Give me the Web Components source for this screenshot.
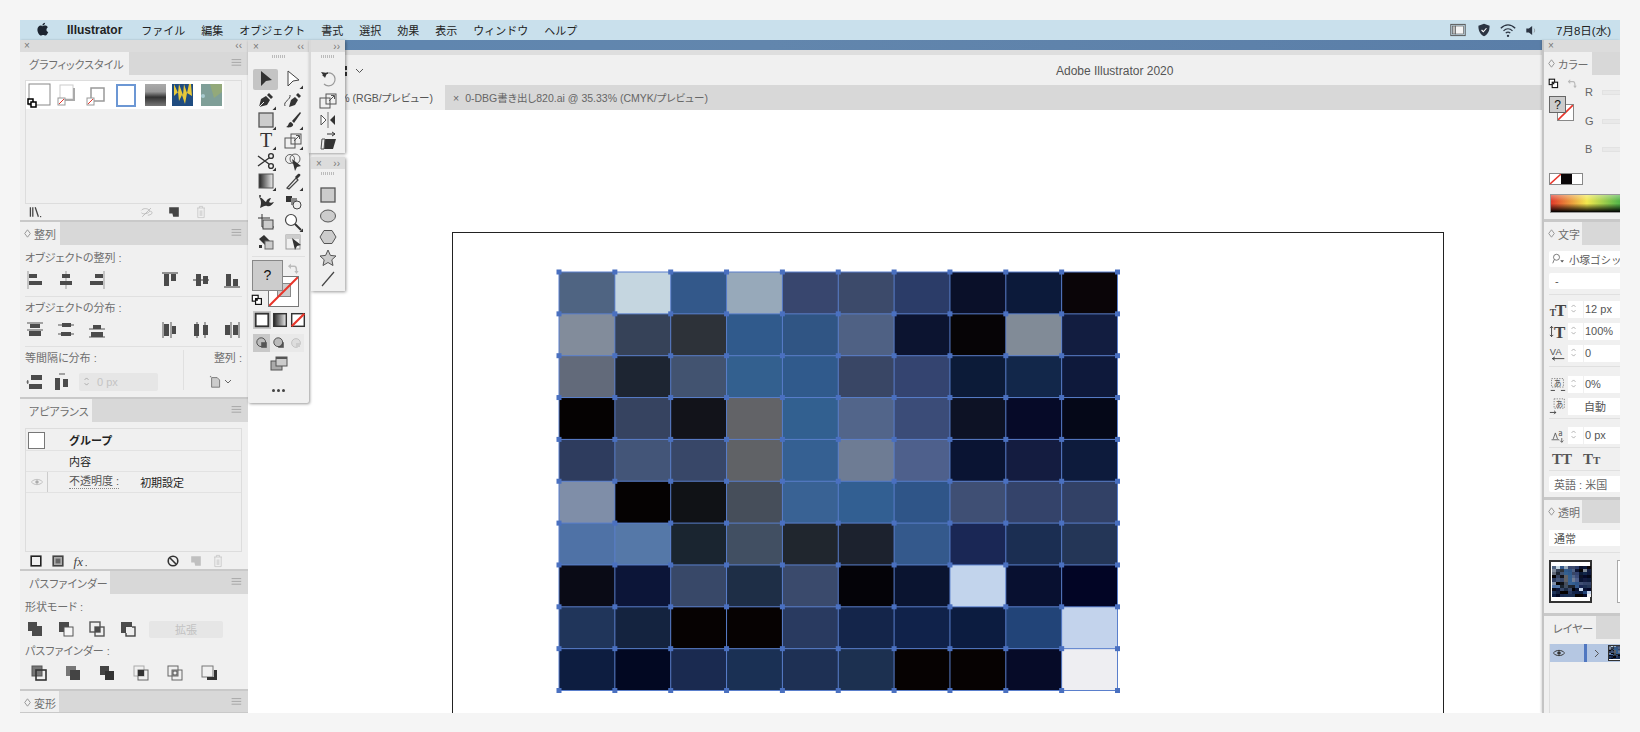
<!DOCTYPE html>
<html lang="ja">
<head>
<meta charset="utf-8">
<title>Illustrator</title>
<style>
  html, body { margin: 0; background: #f5f5f5; }
  body { padding: 20px 20px 0; font-family: "Liberation Sans", "Noto Sans CJK JP", sans-serif; }
</style>
</head>
<body>
<ai-screen></ai-screen>
<script>
// Shared styles and a small helper to register the static components
const BASE = `
  :host { display: block; box-sizing: border-box; }
  * { box-sizing: border-box; }
  .lbl { font-size: 11px; line-height: 16px; color: #6e6e6e; white-space: nowrap; font-feature-settings: "palt"; }
  .row { display: flex; align-items: center; }
  .between { justify-content: space-between; }
  .group { display: flex; gap: 11px; }
  hr { border: 0; border-top: 1px solid #e0e0e0; margin: 0; }
`;
const define = (tag, css, html) => customElements.define(tag, class extends HTMLElement {
    connectedCallback() {
        if (this.shadowRoot) return;
        this.attachShadow({ mode: 'open' }).innerHTML =
            `<style>${BASE}${css}</style>${typeof html === 'function' ? html(this) : html}`;
    }
});

// ---------- Icons ----------
const D = '#4b4b4b';
const rc = (x, y, w, h, fill = D, extra = '') => `<rect x="${x}" y="${y}" width="${w}" height="${h}" fill="${fill}" ${extra}/>`;
const ln = (d, c = '#555', w = 1) => `<path d="${d}" fill="none" stroke="${c}" stroke-width="${w}"/>`;
const box = (x, y, s, fill = 'none', c = D, w = 1.4) => rc(x, y, s, s, fill, `stroke="${c}" stroke-width="${w}"`);
const SLASH = '#e8352a';
const ICONS = {
    'al-l': ln('M3 1v18', '#999') + rc(4, 4, 8, 4) + rc(4, 11, 13, 4),
    'al-c': ln('M10 1v18', '#999') + rc(6, 4, 8, 4) + rc(4, 11, 12, 4),
    'al-r': ln('M17 1v18', '#999') + rc(8, 4, 8, 4) + rc(3, 11, 13, 4),
    'al-t': ln('M2 3h16', '#333') + rc(4, 4, 5, 12) + rc(11, 4, 5, 7),
    'al-m': ln('M2 10h16', '#333') + rc(5, 4, 5, 12) + rc(12, 6, 5, 8),
    'al-b': ln('M2 17h16', '#333') + rc(4, 4, 5, 12) + rc(11, 9, 5, 7),
    'di-t': ln('M2 3h16M2 10h16', '#555') + rc(5, 4, 10, 4) + rc(4, 11, 12, 5),
    'di-m': ln('M2 5h16M2 14h16', '#555') + rc(6, 3, 9, 4) + rc(5, 12, 10, 4),
    'di-b': ln('M2 9h16M2 17h16', '#555') + rc(6, 5, 8, 4) + rc(4, 12, 12, 5),
    'di-l': ln('M3 2v16M11 2v16', '#555') + rc(4, 4, 5, 12) + rc(12, 6, 4, 8),
    'di-c': ln('M6 2v16M14 2v16', '#555') + rc(3, 4, 5, 12) + rc(12, 5, 5, 10),
    'di-r': ln('M9 2v16M17 2v16', '#555') + rc(3, 5, 5, 10) + rc(11, 5, 5, 10),
    'sp-v': ln('M2 10h2M3 8l-1 2 1 2', '#555') + rc(6, 3, 11, 5) + rc(4, 12, 13, 5),
    'sp-h': ln('M7 2h6', '#555') + rc(3, 6, 5, 12) + rc(11, 7, 5, 8),
    'artb': ln('M3 3v1M3 3h1', '#555') + `<path d="M4.5 4.5h7l3 3v9h-10z" fill="#ccc" stroke="#666"/>`,
    libs: ln('M3 4v12M6 4v12', '#444', 1.6) + ln('M9 4l4 12', '#444', 1.6) + rc(15, 15, 1.5, 1.5),
    unlink: ln('M3 8c2-3 8-3 10 0s-8 6-10 3M15 5l-11 11M14 9c2 0 3 2 2 3s-3 2-5 2', '#b5b5b5', 1),
    newb: `<path d="M4 4h12v12H9l-1-4H4z" fill="#444"/>`,
    newg: `<path d="M4 4h12v12H9l-1-4H4z" fill="#c0c0c0"/>`,
    trash: ln('M5 5h10M8 5V3h4v2M6 5v12h8V5M9 8v7M11 8v7', '#c5c5c5'),
    sq: box(4, 4, 12, 'none', '#222', 2),
    sqf: box(4, 4, 12, '#aaa', '#444', 2) + rc(7, 7, 6, 6, '#666'),
    fx: `<text x="2" y="16" font-family="Liberation Serif" font-style="italic" font-size="16" fill="#444">fx</text>` + rc(17, 15, 1.4, 1.4),
    ban: `<circle cx="10" cy="10" r="6" fill="none" stroke="#333" stroke-width="2"/>` + ln('M6 6l8 8', '#333', 2),
    eye: `<path d="M2 10c4-5 12-5 16 0-4 5-12 5-16 0z" fill="none" stroke="#aaa"/><circle cx="10" cy="10" r="2.5" fill="#aaa"/>`,
    eyed: `<path d="M2 10c4-5 12-5 16 0-4 5-12 5-16 0z" fill="none" stroke="#333" stroke-width="1.4"/><circle cx="10" cy="10" r="2.6" fill="#333"/>`,
    'sh-1': rc(3, 3, 9, 9) + rc(7, 7, 10, 10),
    'sh-2': rc(3, 3, 10, 10) + box(8, 8, 9, '#f5f5f5', '#555', 1),
    'sh-3': box(3, 3, 10, '#eee', '#555', 1.4) + box(8, 8, 9, 'none', '#555', 1.4) + rc(8, 8, 5, 5),
    'sh-4': rc(3, 3, 11, 11) + box(8, 8, 9, '#eee', '#444', 1.4) + rc(8, 8, 6, 6, '#eee'),
    'pf-1': box(3, 3, 10, '#777', '#555', 1) + box(7, 7, 10, 'none', '#333', 1.6),
    'pf-2': rc(3, 3, 10, 10, '#777') + rc(7, 7, 10, 10, '#444'),
    'pf-3': rc(3, 3, 9, 9, '#444') + rc(8, 8, 9, 9, '#333'),
    'pf-4': box(3, 3, 10, 'none', '#aaa', 1) + box(7, 7, 10, 'none', '#666', 1) + rc(7, 7, 6, 6, '#333'),
    'pf-5': box(3, 3, 10, 'none', '#666', 1) + box(7, 7, 10, 'none', '#666', 1) + box(8, 8, 4, 'none', '#444', 1),
    'pf-6': box(3, 3, 11, '#f0f0f0', '#777', 1) + `<path d="M15 7h3v10H8v-3h7z" fill="#333"/>`,
    // tools
    select: `<path d="M5 2l11 9-6 1-5 5z" fill="#333"/>`,
    direct: `<path d="M5 2l11 9-6 1-5 5z" fill="#fff" stroke="#444"/>`,
    pen: `<path d="M3 17l2-8 5-3 4 4-3 5z" fill="#333"/><path d="M11 5l2-2 4 4-2 2z" fill="#333"/><path d="M3 17l5-5" stroke="#eee"/>`,
    curve: ln('M2 16c-2-5 6-6 5-11', '#444') + `<path d="M6 17l2-7 4-3 3 3-3 5z" fill="#333"/><path d="M13 5l2-2 3 3-2 2z" fill="#333"/>`,
    rect: box(3, 3, 14, '#ccc', '#555', 1.3),
    brush: `<path d="M17 2l1 1-7 10-2-2z" fill="#333"/><path d="M8 12c-3 0-2 4-5 5 3 1 8 0 7-3z" fill="#333"/>`,
    type: `<text x="10" y="16.5" text-anchor="middle" font-family="Liberation Serif" font-size="20" fill="#333">T</text>`,
    scale: box(2, 8, 10, 'none', '#555', 1) + rc(8, 4, 10, 10, 'none', 'stroke="#555"') + ln('M11 11l5-5M13 5.5h3.5V9', '#555'),
    scissors: `<circle cx="15" cy="5" r="2.4" fill="none" stroke="#333" stroke-width="1.4"/><circle cx="15" cy="15" r="2.4" fill="none" stroke="#333" stroke-width="1.4"/>` + ln('M2 5l11 8M2 15l11-8', '#333', 1.4),
    builder: `<circle cx="7" cy="8" r="4.5" fill="none" stroke="#666"/><circle cx="12" cy="8" r="5" fill="none" stroke="#666"/>` + `<path d="M9 8l9 7-4 1-2 4z" fill="#333"/>`,
    grad: `<rect x="3" y="3" width="14" height="14" fill="url(#g)" stroke="#555"/>`,
    drop: ln('M4 17l9-10 2 2-9 9z', '#444', 1.2) + `<path d="M12 6l3-3c2-1 3 1 2 2l-3 3z" fill="#333"/>`,
    spray: `<path d="M3 5c3 4 2 8 1 11 3-1 5-3 7-2 3 1 5-1 7-4-3 1-4 1-5 0l2-4c-2 0-4 1-5 4-2-1-3-4-7-5z" fill="#333"/><circle cx="4" cy="4" r="1" fill="#333"/>`,
    symb: rc(3, 4, 6, 6, '#333') + rc(8, 6, 6, 7, '#888') + `<circle cx="14" cy="13" r="4" fill="#eee" stroke="#444"/>`,
    crop: ln('M6 2v13h12M2 6h12', '#333') + rc(7, 8, 10, 9, '#ccc', 'stroke="#444"'),
    zoom: `<circle cx="8" cy="8" r="5.5" fill="#fff" stroke="#444" stroke-width="1.2"/>` + ln('M12 12l6 6', '#333', 2),
    bucket: `<path d="M3 7l5-4 6 6-5 4z" fill="#333"/>` + box(9, 9, 8, '#ccc', '#666', 1) + rc(3, 13, 3, 3, '#333'),
    persp: box(3, 3, 14, 'none', '#999', 1) + rc(3, 3, 14, 4, '#ccc') + `<path d="M9 6l9 7-4 1-2 4z" fill="#333"/>`,
    rotate: ln('M5 7a6.5 6.5 0 1 1 1 8', '#999', 1.2) + `<path d="M3 3l6 1-2 5z" fill="#333"/>` + ln('M5 7a6.5 6.5 0 0 1 5-3', '#333', 1.6),
    reflect: ln('M10 2v16', '#777', 1) + `<path d="M8 10L3 5v10z" fill="#fff" stroke="#555"/><path d="M12 10l5-5v10z" fill="#333"/>`,
    shear: ln('M9 3h8M14 1l3 2-3 2', '#333') + `<path d="M4 8h14l-3 10H3z" fill="#333"/><path d="M4 8h3l-1 10H3z" fill="#eee" stroke="#555"/>`,
    ell: `<ellipse cx="10" cy="10" rx="7.5" ry="6" fill="#ccc" stroke="#555"/>`,
    hex: `<path d="M6 3.5h8l4 6.5-4 6.5H6L2 10z" fill="#ccc" stroke="#555"/>`,
    star: `<path d="M10 2l2.4 5.4 5.6.6-4.2 3.8 1.2 5.7-5-3-5 3 1.2-5.7L2 8l5.6-.6z" fill="#ccc" stroke="#555"/>`,
    line: ln('M4 17L16 3', '#444', 1.2),
    swapk: box(2, 2, 9, '#fff', '#111', 1.8) + box(7, 7, 9, '#fff', '#111', 1.8) + rc(7.5, 7.5, 3, 3, '#111'),
    undoa: ln('M4 6h8c3 0 3 3 3 8', '#bbb', 2) + `<path d="M7 2L3 6l4 4zM12 13h6l-3 4z" fill="#bbb"/>`,
    screen: rc(2, 7, 11, 9, '#aaa', 'stroke="#555"') + rc(7, 3, 11, 9, '#ccc', 'stroke="#555"') + rc(7, 3, 11, 2, '#555'),
    dmn: box(3, 3, 14, '#fff', '#333', 2),
    dmg: `<rect x="3" y="3" width="14" height="14" fill="url(#g)" stroke="#333" stroke-width="1.6"/>`,
    dmx: box(3, 3, 14, '#fff', '#333', 1.6) + ln('M3 17L17 3', SLASH, 2.4),
    dr1: `<circle cx="9" cy="9" r="5.5" fill="#bbb" stroke="#333"/>` + rc(9, 9, 7, 7, '#555'),
    dr2: rc(9, 9, 7, 7, '#555') + `<circle cx="9" cy="9" r="5.5" fill="#bbb" stroke="#333"/>`,
    dr3: `<circle cx="10" cy="10" r="5.5" fill="#ddd" stroke="#bbb"/>` + rc(10, 10, 5, 5, '#ccc'),
    monitor: rc(1, 3, 18, 14, 'none', 'stroke="#555" stroke-width="1.2"') + rc(3, 5, 4, 10, '#bbb', 'stroke="#555" stroke-width=".8"') + rc(7, 5, 10, 10, '#f4f4f4', 'stroke="#555" stroke-width=".8"'),
    shield: `<path d="M10 1l8 3c0 7-2 12-8 15C4 16 2 11 2 4z" fill="#2b3442"/>` + ln('M6.5 10l2.5 2.5 4.5-5', '#fff', 1.6),
    wifi: ln('M2 8c5-5 11-5 16 0M5 11c3-3 7-3 10 0M7.5 13.5c1.5-1.5 3.5-1.5 5 0', '#2b3442', 1.4) + `<circle cx="10" cy="16.5" r="1.3" fill="#2b3442"/>`,
    sound: `<path d="M2 7h4l5-4v14l-5-4H2z" fill="#2b3442"/>` + ln('M14 7c1 2 1 4 0 6', '#777', 1),
    apple: `<path d="M13 1c0 2-2 4-4 4 0-2 2-4 4-4zM9 6c1 0 2-1 4-1 1 0 3 .6 4 2.400-3 2-2.500 6 .5 7-1 2.600-2.500 5-4 5-1.200 0-1.800-.8-3.200-.8S8 19.400 7 19.400C5 19.400 2 15 2 11c0-3.500 2.300-6 5-6 .8 0 1.500 1 2 1z" fill="#1c2430"/>`,
    menu: ln('M2 4.500h12M2 8h12M2 11.500h12', '#9a9a9a', 1),
    updn: ln('M4 6l3-3 3 3M4 11l3 3 3-3', '#8c8c8c', 1),
    tsup: ln('M3 15h9M5 14l2.500-7L10 14', '#555') + `<text x="11" y="10" font-size="9" fill="#555" font-family="Noto Sans CJK JP">a</text>` + ln('M15 13v5M13 16l2 2 2-2', '#555'),
    ak1: rc(3, 3, 14, 10, 'none', 'stroke="#777" stroke-dasharray="1.500 1.500"') + `<text x="10" y="12" text-anchor="middle" font-size="9" fill="#444" font-family="Noto Sans CJK JP">あ</text>` + ln('M2 17h5M14 17h5', '#333'),
    ak2: rc(6, 1, 12, 11, 'none', 'stroke="#777" stroke-dasharray="1.500 1.500"') + `<text x="12" y="10" text-anchor="middle" font-size="9" fill="#444" font-family="Noto Sans CJK JP">あ</text>` + ln('M1 17h7M6 15l2 2-2 2', '#333'),
    va: `<text x="1" y="12" font-size="11" fill="#555" font-family="Liberation Sans">VA</text>` + ln('M4 16h14M7 14l-3 2 3 2', '#333'),
    tsize: `<text x="1" y="18" font-size="11" font-weight="bold" fill="#444" font-family="Liberation Serif">T</text><text x="7" y="18" font-size="20" font-weight="bold" fill="#444" font-family="Liberation Serif">T</text>`,
    tlead: ln('M3 4v12M1 6l2-2 2 2M1 14l2 2 2-2', '#333') + `<text x="6" y="18" font-size="20" font-weight="bold" fill="#444" font-family="Liberation Serif">T</text>`,
    find: `<circle cx="6" cy="7" r="4" fill="none" stroke="#555"/>` + ln('M3 10l-2 5', '#555') + `<path d="M11 11h5l-2.500 3z" fill="#555"/>`
};
customElements.define('ai-icon', class extends HTMLElement {
    connectedCallback() {
        const name = this.getAttribute('name');
        const s = this.getAttribute('size') || 20;
        const corner = this.hasAttribute('corner') ? '<path d="M20 20h-3.500l3.500-3.500z" fill="#333"/>' : '';
        this.attachShadow({ mode: 'open' }).innerHTML = `
          <style>:host{display:inline-flex;flex:none;width:${s}px;height:${s}px} svg{display:block;overflow:visible}</style>
          <svg width="${s}" height="${s}" viewBox="0 0 20 20">
            <defs><linearGradient id="g"><stop offset="0" stop-color="#222"/><stop offset="1" stop-color="#eee"/></linearGradient></defs>
            ${ICONS[name] || ''}${corner}
          </svg>`;
    }
});
const ic = (name, extra = '') => `<ai-icon name="${name}" ${extra}></ai-icon>`;

// ---------- Panel shell ----------
define('ai-panel', `
  :host { background: #f0f0f0; display: flex; flex-direction: column; overflow: hidden; flex: none; }
  .bar { height: 12px; background: #dcdcdc; display: flex; align-items: center; justify-content: space-between; padding: 0 6px 0 4px; color: #777; font-size: 10px; line-height: 12px; }
  .tabs { display: flex; height: 23px; background: #d8d8d8; flex: none; }
  .tab { background: #f0f0f0; display: flex; align-items: center; gap: 3px; padding: 0 var(--tab-pad, 9px) 0 9px; width: var(--tab-w, auto); font-size: 11px; color: #6e6e6e; white-space: nowrap; font-feature-settings: "palt"; }
  .tab.dm { padding-left: 4px; }
  .tab svg { flex: none; }
  .fill { flex: 1; display: flex; align-items: center; justify-content: flex-end; padding-right: 2px; }
  .body { flex: 1; min-height: 0; position: relative; }
`, el => `
  ${el.hasAttribute('bar') ? `<div class="bar"><span>×</span><span>${el.getAttribute('bar')}</span></div>` : ''}
  <div class="tabs">
    <div class="tab ${el.hasAttribute('diamond') ? 'dm' : ''}">
      ${el.hasAttribute('diamond') ? '<svg width="7" height="9" viewBox="0 0 7 9"><path d="M3.500.8L6.300 4.500 3.500 8.200.7 4.500z" fill="none" stroke="#999"/></svg>' : ''}
      ${el.getAttribute('label')}
    </div>
    <div class="fill">${el.hasAttribute('nomenu') ? '' : ic('menu', 'size="16"')}</div>
  </div>
  <div class="body"><slot></slot></div>
`);

// ---------- Left dock ----------
const swatch = {
    a: `<rect x="3" y="3" width="21" height="21" fill="#fff" stroke="#888"/><rect x="2" y="18" width="5" height="5" fill="#fff" stroke="#000" stroke-width="1.500"/><rect x="5" y="21" width="5" height="5" fill="#fff" stroke="#000" stroke-width="1.500"/>`,
    b: `<rect x="6" y="4" width="13" height="14" fill="#fff" stroke="#ccc"/><path d="M8 19h12V7" fill="none" stroke="#aaa" stroke-width="2"/><rect x="4" y="17" width="7" height="7" fill="#fff" stroke="#999"/><path d="M5 23l5-5" stroke="${SLASH}"/>`,
    c: `<rect x="9" y="7" width="13" height="13" fill="#fff" stroke="#999" stroke-width="1.500"/><rect x="5" y="17" width="7" height="7" fill="#fff" stroke="#999"/><path d="M6 23l5-5" stroke="${SLASH}"/>`
};
define('style-swatches', `
  :host { display: flex; height: 28px; width: 198px; background: #fff; }
  svg { display: block; flex: none; }
`, `
  <svg width="28" height="28">${swatch.a}</svg>
  <svg width="28" height="28">${swatch.b}</svg>
  <svg width="28" height="28">${swatch.c}</svg>
  <svg width="28" height="28"><rect x="7" y="4" width="18" height="21" fill="#fff" stroke="#6c97d4" stroke-width="2"/></svg>
  <svg width="28" height="28"><defs><linearGradient id="m" x2="0" y2="1"><stop offset="0" stop-color="#aaa"/><stop offset=".35" stop-color="#999"/><stop offset=".6" stop-color="#333"/><stop offset="1" stop-color="#777"/></linearGradient></defs><rect x="7" y="3" width="21" height="22" fill="url(#m)"/></svg>
  <svg width="28" height="28"><rect x="6" y="3" width="21" height="22" fill="#1f4c80"/><path d="M8 3l4 9 1-9 4 11 1-11 3 9 2-9h2l1 12-5-3-2 11-3-9-3 6-1-9-4 4z" fill="#e8c93a"/></svg>
  <svg width="28" height="28"><rect x="7" y="3" width="21" height="22" fill="#7f9f98"/><path d="M16 3h12v8l-8 6z" fill="#93a97a"/><circle cx="9" cy="15" r="2" fill="#a8cbd0"/></svg>
`);
define('graphic-styles-panel', `
  .list { margin: 5px 6px 0 5px; height: 124px; border: 1px solid #ddd; }
  .foot { padding: 0 8px; gap: 11px; height: 16px; }
  .sp { flex: 1; }
`, `
  <ai-panel bar="‹‹" label="グラフィックスタイル" style="height:180px;--tab-w:109px">
    <div class="list"><style-swatches></style-swatches></div>
    <div class="row foot">${ic('libs', 'size="16"')}<span class="sp"></span>${ic('unlink', 'size="16"')}${ic('newb', 'size="16"')}${ic('trash', 'size="16"')}<span style="width:20px"></span></div>
  </ai-panel>
`);
define('align-panel', `
  .pad { padding: 5px 6px 0 5px; }
  .icons { height: 20px; margin-top: 4px; }
  hr { margin: 6px 0 3px; }
  .third { display: flex; height: 45px; }
  .third > div:first-child { flex: 1; border-right: 1px solid #e0e0e0; height: 40px; }
  .ic2 { gap: 7px; height: 22px; margin-top: 5px; }
  .num { width: 79px; height: 18px; background: #e6e6e6; border-radius: 2px; display: flex; align-items: center; gap: 2px; color: #c4c4c4; font-size: 11px; padding-left: 3px; }
  .r { width: 58px; text-align: right; }
`, `
  <ai-panel diamond label="整列" style="height:175px;--tab-w:40px">
    <div class="pad">
      <div class="lbl">オブジェクトの整列 :</div>
      <div class="row between icons">
        <div class="group">${ic('al-l')}${ic('al-c')}${ic('al-r')}</div>
        <div class="group">${ic('al-t')}${ic('al-m')}${ic('al-b')}</div>
      </div>
      <hr>
      <div class="lbl">オブジェクトの分布 :</div>
      <div class="row between icons">
        <div class="group">${ic('di-t')}${ic('di-m')}${ic('di-b')}</div>
        <div class="group">${ic('di-l')}${ic('di-c')}${ic('di-r')}</div>
      </div>
      <hr>
      <div class="third">
        <div>
          <div class="lbl">等間隔に分布 :</div>
          <div class="row ic2">${ic('sp-v')}${ic('sp-h')}<div class="num">${ic('updn', 'size="13"')}0 px</div></div>
        </div>
        <div class="r">
          <div class="lbl">整列 :</div>
          <div class="row" style="justify-content:center;height:22px;margin-top:5px;padding-left:14px">${ic('artb', 'size="16"')}<svg width="8" height="6"><path d="M1 1l3 3 3-3" fill="none" stroke="#666"/></svg></div>
        </div>
      </div>
    </div>
  </ai-panel>
`);
define('appearance-panel', `
  .list { margin: 6px 6px 0 5px; height: 124px; border: 1px solid #ddd; font-size: 11px; color: #222; padding-top: 1px; }
  .rw { display: flex; align-items: center; height: 21px; border-bottom: 1px solid #e2e2e2; }
  .sw { width: 17px; height: 17px; background: #fff; border: 1px solid #777; margin-left: 2px; }
  .eye { width: 22px; height: 100%; border-right: 1px solid #ccc; display: flex; align-items: center; justify-content: center; }
  .foot { padding: 0 0 0 8px; height: 17px; }
  .u { border-bottom: 1px dotted #888; color: #555; line-height: 13px; }
`, `
  <ai-panel label="アピアランス" style="height:170px;--tab-w:72px">
    <div class="list">
      <div class="rw"><span class="sw"></span><b style="margin-left:24px">グループ</b></div>
      <div class="rw"><span style="margin-left:43px">内容</span></div>
      <div class="rw"><span class="eye">${ic('eye', 'size="14"')}</span><span class="u" style="margin-left:21px">不透明度 :</span><span style="margin-left:21px">初期設定</span></div>
    </div>
    <div class="row foot">
      ${ic('sq', 'size="16"')}<span style="width:6px"></span>${ic('sqf', 'size="16"')}<span style="width:6px"></span>${ic('fx', 'size="16"')}
      <span style="width:77px"></span>${ic('ban', 'size="16"')}<span style="width:7px"></span>${ic('newg', 'size="16"')}<span style="width:6px"></span>${ic('trash', 'size="16"')}
    </div>
  </ai-panel>
`);
define('pathfinder-panel', `
  .pad { padding: 5px 6px 0 5px; }
  .icons { height: 22px; }
  .btn { width: 74px; height: 17px; background: #e6e6e6; border-radius: 2px; color: #c2c2c2; font-size: 11px; display: flex; align-items: center; justify-content: center; }
`, `
  <ai-panel label="パスファインダー" style="height:118px;--tab-w:90px">
    <div class="pad">
      <div class="lbl">形状モード :</div>
      <div class="row icons" style="gap:11px;margin-top:3px">${ic('sh-1')}${ic('sh-2')}${ic('sh-3')}${ic('sh-4')}<div class="btn">拡張</div></div>
      <div class="lbl" style="margin-top:3px">パスファインダー :</div>
      <div class="row icons" style="gap:14px;padding-left:4px;margin-top:3px">${ic('pf-1')}${ic('pf-2')}${ic('pf-3')}${ic('pf-4')}${ic('pf-5')}${ic('pf-6')}</div>
    </div>
  </ai-panel>
`);
define('left-dock', `
  :host { width: 228px; background: #c9c9c9; display: flex; flex-direction: column; gap: 2px; flex: none; box-shadow: 1px 0 2px rgba(0,0,0,.2); overflow: hidden; }
`, `
  <graphic-styles-panel></graphic-styles-panel>
  <align-panel></align-panel>
  <appearance-panel></appearance-panel>
  <pathfinder-panel></pathfinder-panel>
  <ai-panel diamond label="変形" style="height:21px;--tab-w:39px"></ai-panel>
`);

// ---------- Floating tool palettes ----------
define('tool-palette', `
  :host { position: absolute; left: 228px; top: 20px; width: 61px; height: 363px; background: #f0f0f0; box-shadow: 1px 1px 3px rgba(0,0,0,.4); border-radius: 0 0 2px 2px; }
  .bar { height: 12px; background: #dcdcdc; display: flex; justify-content: space-between; align-items: center; padding: 0 5px; color: #777; font-size: 10px; }
  .grip { height: 8px; display: flex; justify-content: center; align-items: center; }
  .grip i { width: 14px; height: 3px; background: repeating-linear-gradient(90deg, #bbb 0 1px, transparent 1px 2px); }
  .tools { display: grid; grid-template-columns: 27px 27px; grid-auto-rows: 20.4px; padding: 9px 0 0 4px; justify-items: center; align-items: center; }
  .on { background: #c4c4c4; width: 25px; height: 21px; border-radius: 2px; display: flex; align-items: center; justify-content: center; }
  .div { margin: 3px 4px 0; border-top: 1px solid #e0e0e0; }
  .fs { position: relative; height: 47px; margin-top: 3px; }
  .fill { position: absolute; left: 4px; top: 0; width: 31px; height: 31px; background: #ccc; border: 1px solid #888; z-index: 1; font-size: 14px; color: #111; display: flex; align-items: center; justify-content: center; }
  .stroke { position: absolute; left: 20px; top: 16px; width: 31px; height: 31px; background: #fff; border: 1px solid #777; }
  .stroke i { position: absolute; left: 8px; top: 6px; width: 14px; height: 14px; background: #ccc; border: 1px solid #888; }
  .stroke svg { position: absolute; left: 0; top: 0; }
  .fs ai-icon { position: absolute; }
  .modes { display: flex; justify-content: space-between; margin: 5px 5px 0; height: 18px; background: #e9e9e9; }
  .modes span { width: 17px; display: flex; align-items: center; justify-content: center; }
  .modes .sel { background: #c8c8c8; }
  .scr { display: flex; justify-content: center; margin-top: 2px; }
  .dots { text-align: center; margin-top: 11px; height: 12px; display: flex; justify-content: center; gap: 2px; align-items: center; }
  .dots i { width: 3px; height: 3px; background: #444; border-radius: 50%; }
`, `
  <div class="bar"><span>×</span><span>‹‹</span></div>
  <div class="grip"><i></i></div>
  <div class="tools">
    <span class="on">${ic('select')}</span>${ic('direct', 'corner')}
    ${ic('pen', 'corner')}${ic('curve')}
    ${ic('rect', 'corner')}${ic('brush', 'corner')}
    ${ic('type', 'corner')}${ic('scale', 'corner')}
    ${ic('scissors', 'corner')}${ic('builder')}
    ${ic('grad', 'corner')}${ic('drop', 'corner')}
    ${ic('spray')}${ic('symb')}
    ${ic('crop')}${ic('zoom', 'corner')}
    ${ic('bucket')}${ic('persp')}
  </div>
  <div class="div"></div>
  <div class="fs">
    <div class="stroke"><i></i><svg width="29" height="29"><path d="M0 29L29 0" stroke="${SLASH}" stroke-width="2"/></svg></div>
    <div class="fill">?</div>
    ${ic('undoa', 'size="14" style="left:38px;top:2px"')}
    ${ic('swapk', 'size="13" style="left:3px;top:34px"')}
  </div>
  <div class="modes" style="background:transparent;margin-top:4px">
    <span class="sel" style="width:18px">${ic('dmn', 'size="18"')}</span><span style="width:18px">${ic('dmg', 'size="18"')}</span><span style="width:18px">${ic('dmx', 'size="18"')}</span>
  </div>
  <div class="modes" style="margin-top:5px">
    <span class="sel">${ic('dr1', 'size="16"')}</span><span>${ic('dr2', 'size="16"')}</span><span>${ic('dr3', 'size="16"')}</span>
  </div>
  <div class="scr">${ic('screen')}</div>
  <div class="dots"><i></i><i></i><i></i></div>
`);
const miniBar = `
  :host { position: absolute; background: #f0f0f0; box-shadow: 1px 1px 3px rgba(0,0,0,.4); width: 34px; }
  .bar { height: 12px; background: #dcdcdc; display: flex; justify-content: space-between; align-items: center; padding: 0 5px; color: #777; font-size: 10px; }
  .grip { height: 8px; display: flex; justify-content: center; align-items: center; }
  .grip i { width: 14px; height: 3px; background: repeating-linear-gradient(90deg, #bbb 0 1px, transparent 1px 2px); }
  .col { display: flex; flex-direction: column; align-items: center; }
`;
define('transform-palette', miniBar + `
  :host { left: 289px; top: 20px; height: 113px; width: 36px; border-left: 2px solid #d8d8d8; }
  .col { margin-top: 9px; gap: .5px; }
`, `
  <div class="bar"><span></span><span>››</span></div>
  <div class="grip"><i></i></div>
  <div class="col">${ic('rotate')}${ic('scale')}${ic('reflect')}${ic('shear')}</div>
`);
define('shape-palette', miniBar + `
  :host { left: 291px; top: 137px; height: 134px; }
  .col { margin-top: 8px; gap: 1px; }
`, `
  <div class="bar"><span>×</span><span>››</span></div>
  <div class="grip"><i></i></div>
  <div class="col">${ic('rect')}${ic('ell')}${ic('hex')}${ic('star')}${ic('line')}</div>
`);

// ---------- Document ----------
const CELLS = [
  '#4f6482 #c5d6e0 #33588a #97a9ba #38466e #3c4a6a #2b3c68 #0a1029 #0c1a3a #0a0508',
  '#828c9b #364258 #2d3239 #305a8c #305584 #4f6184 #0c1430 #060406 #818b97 #121d40',
  '#626a7a #1d2532 #425370 #33608f #305a8c #394665 #344470 #0c1b38 #12274a #0e193b',
  '#050202 #364360 #12131a #626367 #326090 #52658a #3b4c78 #0d1225 #060a28 #050818',
  '#2e3c5e #435578 #384768 #606266 #356092 #6e7c94 #4e608c #0a1433 #141c40 #0d1b3c',
  '#7f8ea8 #050202 #101216 #464e5a #396294 #325f92 #2f5588 #3f4f74 #34436a #324166',
  '#4f72a6 #5578a8 #1a2530 #414f62 #20262e #1c222e #34598c #1a2755 #1b2e52 #243657',
  '#0a0b16 #0c1538 #384868 #1e2e46 #3a4a6c #040308 #0a1430 #c2d4ec #081030 #020525',
  '#20355a #14233f #060202 #060202 #293a60 #14254a #10224a #0c1c40 #224478 #c3d3ec',
  '#0d1d40 #020822 #1a2a50 #1a3054 #1e3054 #1c3050 #060202 #060202 #060b28 #eeeef2'
].map(r => r.split(' '));

customElements.define('mosaic-art', class extends HTMLElement {
    connectedCallback() {
        const w = +this.getAttribute('cell-w'), h = +this.getAttribute('cell-h');
        const selected = this.hasAttribute('selected');
        const pad = selected ? 3 : 0;
        let out = '';
        CELLS.forEach((row, y) => row.forEach((c, x) => {
            out += `<rect x="${pad + x * w}" y="${pad + y * h}" width="${w}" height="${h}" fill="${c}" shape-rendering="crispEdges"/>`;
        }));
        if (selected) {
            for (let i = 0; i <= 10; i++) {
                out += `<path d="M${pad + i * w} ${pad}V${pad + 10 * h}M${pad} ${pad + i * h}H${pad + 10 * w}" stroke="#5a7fcc" stroke-width="1" fill="none"/>`;
            }
            for (let y = 0; y <= 10; y++) for (let x = 0; x <= 10; x++) {
                out += `<rect x="${pad + x * w - 2.5}" y="${pad + y * h - 2.5}" width="5" height="5" fill="#4a70c0"/>`;
            }
        }
        this.attachShadow({ mode: 'open' }).innerHTML = `
          <style>:host{display:block;width:${w * 10 + pad * 2}px;height:${h * 10 + pad * 2}px} svg{display:block}</style>
          <svg width="${w * 10 + pad * 2}" height="${h * 10 + pad * 2}">${out}</svg>`;
    }
});

define('doc-window', `
  :host { flex: 1; min-width: 0; display: flex; flex-direction: column; background: #fff; }
  .desk { height: 10px; background: linear-gradient(90deg, #5f86b0, #6286ad 40%, #5a7ea8 100%); flex: none; }
  .gap { height: 5px; background: #dedede; flex: none; }
  .title { height: 30px; background: #f0f0f0; flex: none; display: flex; align-items: center; font-size: 12px; color: #555; padding-top: 1px; }
  .title .grid { margin-left: 95px; width: 4px; height: 11px; background: repeating-linear-gradient(0deg, #333 0 4px, transparent 4px 6px); }
  .title svg { margin-left: 8px; }
  .title .name { margin-left: 692px; }
  .tabs { height: 25px; background: #d8d8d8; flex: none; display: flex; font-size: 10.5px; color: #666; white-space: nowrap; font-feature-settings: "palt"; }
  .t1 { width: 197px; background: #f0f0f0; padding-right: 12px; color: #555; display: flex; align-items: center; justify-content: flex-end; }
  .t2 { padding-left: 8px; display: flex; align-items: center; gap: 6px; }
  .canvas { flex: 1; min-height: 0; overflow: hidden; padding: 122px 0 0 204px; }
  .board { width: 992px; height: 500px; border: 1px solid #222; padding: 36px 0 0 103px; }
`, `
  <div class="desk"></div><div class="gap"></div>
  <div class="title"><span class="grid"></span><svg width="9" height="6"><path d="M1 1l3.500 3.500L8 1" fill="none" stroke="#555"/></svg><span class="name">Adobe Illustrator 2020</span></div>
  <div class="tabs">
    <div class="t1">% (RGB/プレビュー)</div>
    <div class="t2"><span>×</span><span>0-DBG書き出し820.ai @ 35.33% (CMYK/プレビュー)</span></div>
  </div>
  <div class="canvas"><div class="board"><mosaic-art selected cell-w="55.85" cell-h="41.85"></mosaic-art></div></div>
`);

// ---------- Right dock ----------
define('color-panel', `
  .wrap { position: relative; height: 144px; }
  .fs { position: absolute; left: 5px; top: 21px; width: 26px; height: 26px; }
  .f { position: absolute; left: 0; top: 0; width: 17px; height: 17px; background: #ccc; border: 1px solid #666; font-size: 12px; color: #111; display: flex; align-items: center; justify-content: center; z-index: 1; line-height: 1; }
  .s { position: absolute; left: 8px; top: 8px; width: 17px; height: 17px; background: #fff; border: 1px solid #888; }
  .s svg { position: absolute; left: 0; top: 0; }
  .wrap > ai-icon { position: absolute; }
  .ch { position: absolute; left: 41px; font-size: 11px; color: #666; }
  .sl { position: absolute; left: 58px; width: 30px; height: 5px; background: #e9e9e9; border: 1px solid #e2e2e2; }
  .sw { position: absolute; left: 5px; top: 98px; width: 34px; height: 12px; display: flex; border: 1px solid #888; background: #fff; }
  .sw i { flex: 1; position: relative; }
  .sp { position: absolute; left: 6px; top: 119px; width: 80px; height: 19px; border: 1px solid #999;
        background: linear-gradient(180deg, rgba(255,255,255,.35), transparent 35%, transparent 50%, #000 100%), linear-gradient(90deg, #e03a2a, #f2e84e 46%, #5cb84a 85%, #3aa040); }
`, `
  <ai-panel bar="" diamond nomenu label="カラー" style="height:179px;--tab-w:48px">
    <div class="wrap">
      ${ic('swapk', 'size="12" style="left:4px;top:3px"')}
      ${ic('undoa', 'size="12" style="left:22px;top:3px"')}
      <div class="fs"><div class="s"><svg width="15" height="15"><path d="M0 15L15 0" stroke="${SLASH}" stroke-width="1.600"/></svg></div><div class="f">?</div></div>
      <span class="ch" style="top:11px">R</span><i class="sl" style="top:15px"></i>
      <span class="ch" style="top:40px">G</span><i class="sl" style="top:44px"></i>
      <span class="ch" style="top:68px">B</span><i class="sl" style="top:72px"></i>
      <div class="sw"><i><svg width="11" height="10" style="display:block"><path d="M0 10L11 0" stroke="${SLASH}" stroke-width="1.500"/></svg></i><i style="background:#0a0608"></i><i></i></div>
      <div class="sp"></div>
    </div>
  </ai-panel>
`);
define('type-panel', `
  .pad { padding: 6px 0 0 5px; font-size: 11px; color: #555; }
  .in { background: #fff; height: 16px; width: 75px; display: flex; align-items: center; padding-left: 3px; border-radius: 2px; white-space: nowrap; }
  .rw { display: flex; align-items: center; height: 22px; }
  .st { width: 15px; height: 17px; background: #fff; margin-left: 2px; margin-right: 1px; display: flex; align-items: center; justify-content: center; flex: none; }
  .v { background: #fff; height: 17px; width: 50px; display: flex; align-items: center; padding-left: 1px; }
  hr { width: 75px; }
  .tt { font-family: "Liberation Serif", serif; font-weight: bold; font-size: 15px; color: #555; display: flex; gap: 11px; height: 20px; align-items: center; padding-left: 3px; }
  small { font-size: 11px; }
`, `
  <ai-panel diamond nomenu label="文字" style="height:275px;--tab-w:38px">
    <div class="pad">
      <div class="in">${ic('find', 'size="15"')}<span style="margin-left:2px;font-size:10.5px">小塚ゴシッ</span></div>
      <div class="in" style="margin-top:6px;padding-left:6px">-</div>
      <hr style="margin:5px 0 1px">
      <div class="rw" style="margin-top:3px">${ic('tsize', 'size="17"')}<span class="st">${ic('updn', 'size="13"')}</span><span class="v">12 px</span></div>
      <div class="rw">${ic('tlead', 'size="17"')}<span class="st">${ic('updn', 'size="13"')}</span><span class="v">100%</span></div>
      <div class="rw">${ic('va', 'size="17"')}<span class="st">${ic('updn', 'size="13"')}</span><span class="v">0</span></div>
      <hr style="margin:2px 0 6px">
      <div class="rw">${ic('ak1', 'size="17"')}<span class="st">${ic('updn', 'size="13"')}</span><span class="v">0%</span></div>
      <div class="rw">${ic('ak2', 'size="17"')}<span class="st" style="margin-right:0"></span><span class="v">自動</span></div>
      <hr style="margin:1px 0 5px">
      <div class="rw">${ic('tsup', 'size="17"')}<span class="st">${ic('updn', 'size="13"')}</span><span class="v">0 px</span></div>
      <hr style="margin:1px 0 1px">
      <div class="tt"><span>TT</span><span>T<small>T</small></span></div>
      <hr style="margin:1px 0 5px">
      <div class="in" style="padding-left:5px;color:#666">英語 : 米国</div>
    </div>
  </ai-panel>
`);
define('transparency-panel', `
  .pad { padding: 7px 0 0 5px; font-size: 11px; color: #555; }
  .in { background: #fff; height: 16px; width: 75px; display: flex; align-items: center; padding-left: 5px; }
  hr { margin: 6px 0 7px; width: 75px; }
  .thumbs { display: flex; gap: 25px; width: 73px; overflow: hidden; }
  .th { width: 43px; height: 43px; border: 2px solid #333; background: #fff; padding: 4px 1px 0; flex: none; }
  .th2 { width: 43px; height: 43px; border: 1px solid #aaa; background: #fff; flex: none; }
`, `
  <ai-panel diamond nomenu label="透明" style="height:113px;--tab-w:38px">
    <div class="pad">
      <div class="in">通常</div>
      <hr>
      <div class="thumbs"><div class="th"><mosaic-art cell-w="3.900" cell-h="3.100"></mosaic-art></div><div class="th2"></div></div>
    </div>
  </ai-panel>
`);
define('layers-panel', `
  :host { flex: 1; min-height: 0; display: flex; }
  .box { margin: 5px 0 0 5px; height: 100px; border-left: 1px solid #ddd; }
  .layer { height: 18px; background: #b5c7e2; display: flex; align-items: center; width: 75px; overflow: hidden; }
  .e { width: 18px; display: flex; justify-content: center; }
  .bar { width: 3px; height: 18px; background: #5077c0; margin-left: 16px; }
  .chev { margin-left: 7px; }
  .th { width: 14px; height: 16px; margin-left: 8px; background: #fff; border: 1px solid #333; flex: none; overflow: hidden; }
`, `
  <ai-panel nomenu label="レイヤー" style="flex:1;--tab-w:52px">
    <div class="box">
      <div class="layer">
        <span class="e">${ic('eyed', 'size="14"')}</span><span class="bar"></span>
        <svg class="chev" width="6" height="9"><path d="M1 1l3.500 3.500L1 8" fill="none" stroke="#555"/></svg>
        <span class="th"><mosaic-art cell-w="1.800" cell-h="1.300"></mosaic-art></span>
      </div>
    </div>
  </ai-panel>
`);
define('right-dock', `
  :host { width: 78px; flex: none; background: #c9c9c9; display: flex; flex-direction: column; gap: 3px; border-left: 2px solid #c4c4c4; overflow: hidden; box-shadow: -1px 0 2px rgba(0,0,0,.15); }
`, `
  <color-panel></color-panel>
  <type-panel></type-panel>
  <transparency-panel></transparency-panel>
  <layers-panel></layers-panel>
`);

// ---------- Menu bar + screen ----------
define('menu-bar', `
  :host { height: 20px; flex: none; background: #c9e0ec; display: flex; align-items: center; color: #222; font-family: "Liberation Sans", "Noto Sans CJK JP", sans-serif; font-size: 11px; white-space: nowrap; }
  .apple { margin-left: 16px; }
  b { font-size: 12px; margin-left: 17px; }
  .items { display: flex; gap: 16px; margin-left: 19px; }
  .status { margin-left: auto; display: flex; align-items: center; padding-right: 9px; }
  .date { margin-left: 18px; font-size: 11.5px; }
`, `
  <span class="apple">${ic('apple', 'size="14"')}</span>
  <b>Illustrator</b>
  <div class="items"><span>ファイル</span><span>編集</span><span>オブジェクト</span><span>書式</span><span>選択</span><span>効果</span><span>表示</span><span>ウィンドウ</span><span>ヘルプ</span></div>
  <div class="status">
    ${ic('monitor', 'size="16"')}<span style="width:11px"></span>${ic('shield', 'size="14"')}<span style="width:8px"></span>${ic('wifi', 'size="18"')}<span style="width:8px"></span>${ic('sound', 'size="13"')}<span class="date">7月8日(水)</span>
  </div>
`);
define('ai-screen', `
  :host { width: 1600px; height: 693px; position: relative; display: flex; flex-direction: column; overflow: hidden; font-family: "Liberation Sans", "Noto Sans CJK JP", sans-serif; }
  .work { flex: 1; min-height: 0; display: flex; }
`, `
  <menu-bar></menu-bar>
  <div class="work">
    <left-dock></left-dock>
    <doc-window></doc-window>
    <right-dock></right-dock>
  </div>
  <tool-palette></tool-palette>
  <transform-palette></transform-palette>
  <shape-palette></shape-palette>
`);
</script>
</body>
</html>
